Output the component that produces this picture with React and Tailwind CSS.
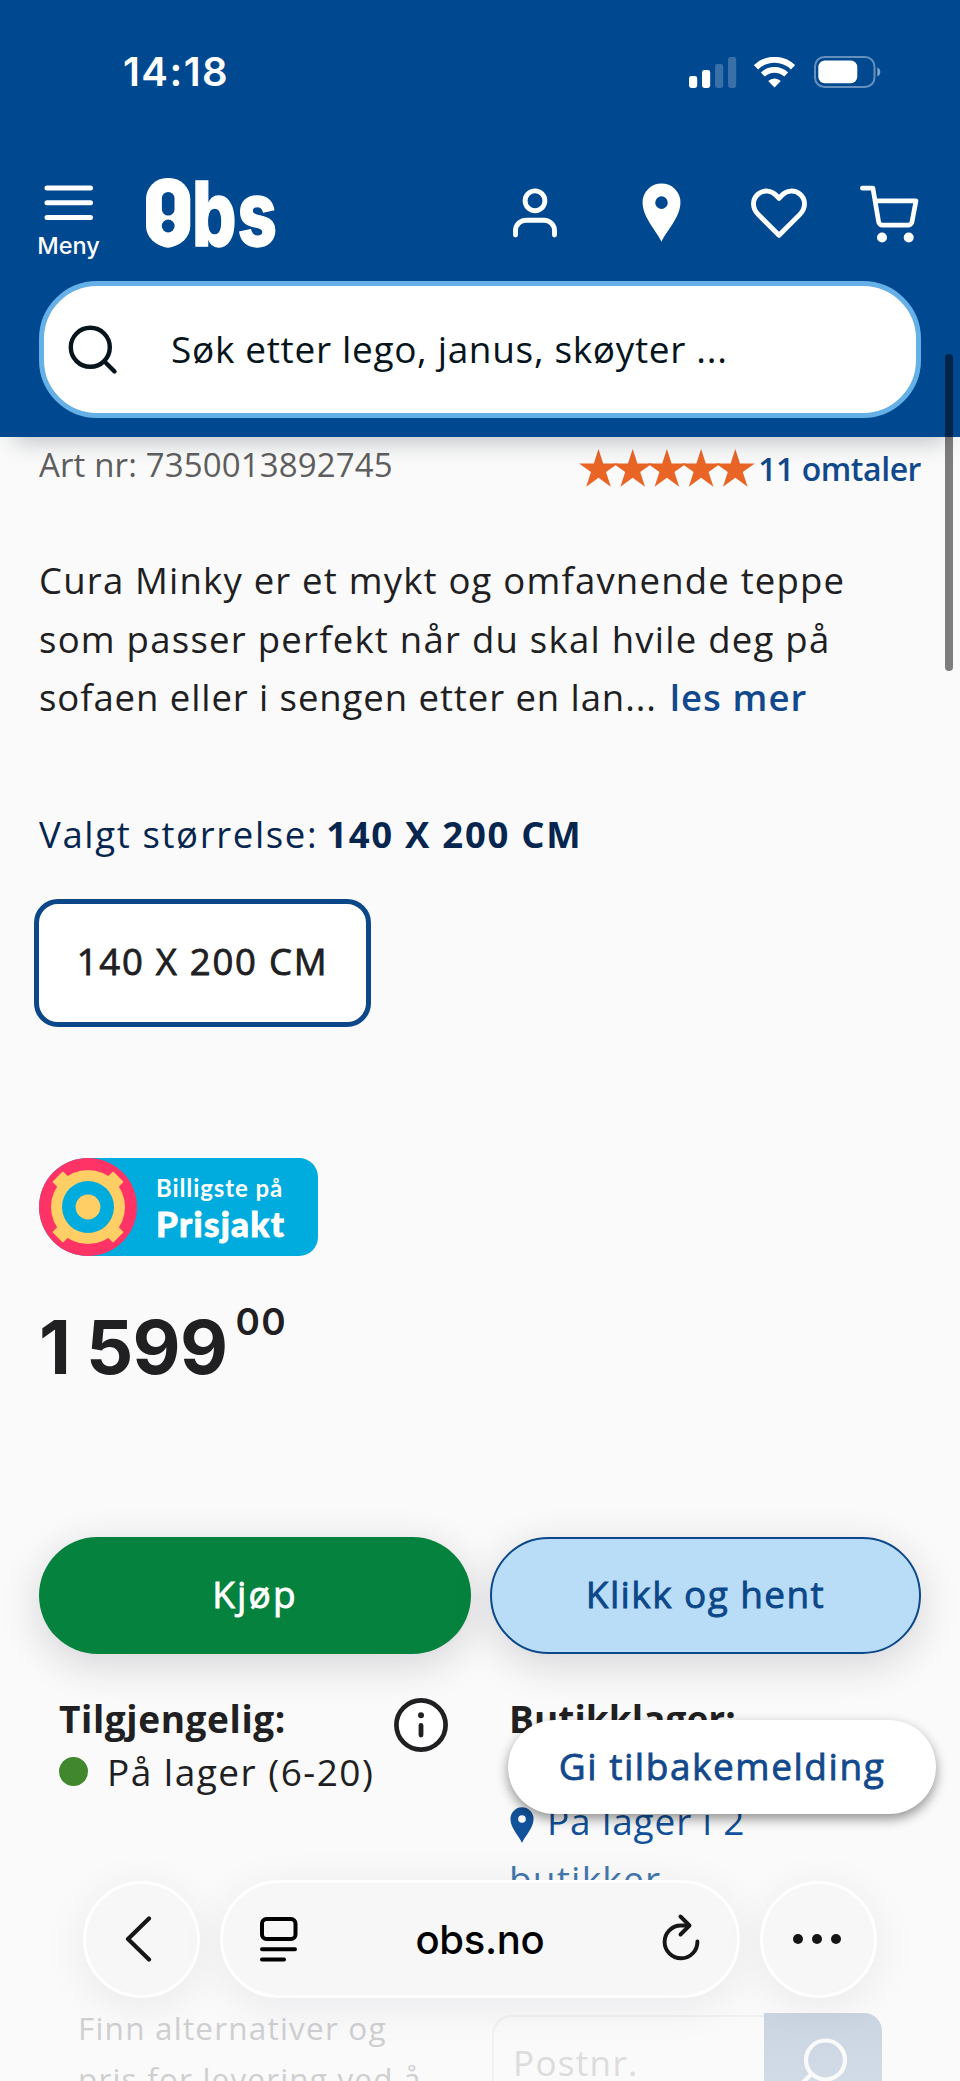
import React from "react";

const SignalIcon = () => (
  <svg className="h-[31px] w-[48px]" viewBox="0 0 48 31" fill="#fff">
    <rect x="0" y="19" width="8.2" height="12" rx="2.4" />
    <rect x="13" y="13" width="8.2" height="18" rx="2.4" />
    <rect x="26" y="7" width="8.2" height="24" rx="2.4" opacity=".22" />
    <rect x="39" y="0" width="8.2" height="31" rx="2.4" opacity=".22" />
  </svg>
);

const WifiIcon = () => (
  <svg className="h-[31px] w-[41px]" viewBox="0 0 41 31" fill="none" stroke="#fff">
    <path d="M2 10.3a26.5 26.5 0 0 1 37 0" strokeWidth="6" />
    <path d="M8.8 17.6a16.8 16.8 0 0 1 23.4 0" strokeWidth="5.6" />
    <path d="M20.5 30.5 14.2 24a9 9 0 0 1 12.6 0Z" fill="#fff" stroke="none" />
  </svg>
);

const BatteryIcon = () => (
  <svg className="h-[32px] w-[67px]" viewBox="0 0 67 32">
    <rect x="1" y="1" width="59.5" height="30" rx="9.5" fill="none" stroke="#fff" strokeWidth="2" opacity=".4" />
    <rect x="4.3" y="4.6" width="39" height="22.6" rx="6.5" fill="#fff" />
    <path d="M63.3 11.5c4 1.4 4 7.6 0 9Z" fill="#fff" opacity=".5" />
  </svg>
);

const Logo = () => (
  <svg className="-mx-1 -my-5 h-[110px] w-[140px]" viewBox="-4 -20 140 110">
    <g fill="#fff" stroke="#fff" strokeWidth="1.4" className="font-['Inter',sans-serif] font-extrabold" fontSize="90">
      <text x="1" y="67.5" textLength="42" lengthAdjust="spacingAndGlyphs">O</text>
      <text x="46" y="67.5" textLength="44.5" lengthAdjust="spacingAndGlyphs">b</text>
      <text x="91.5" y="67.5" textLength="39.5" lengthAdjust="spacingAndGlyphs">s</text>
    </g>
    {/* the O carries an upside down "!" */}
    <rect x="0" y="0" width="44.3" height="68.5" rx="21" fill="#fff" />
    <rect x="15.9" y="14" width="12.6" height="23.5" rx="6.3" fill="#00488f" />
    <circle cx="22.2" cy="48" r="6.4" fill="#00488f" />
  </svg>
);

const PersonIcon = () => (
  <svg className="h-16 w-[60px]" viewBox="0 0 60 64" fill="none" stroke="#fff" strokeWidth="4.9" strokeLinecap="round">
    <circle cx="30" cy="19.8" r="9.9" />
    <path d="M10.5 54v-4.3A10.5 10.5 0 0 1 21 39.2h18a10.5 10.5 0 0 1 10.5 10.5V54" />
  </svg>
);

const PinIcon = ({ className }) => (
  <svg className={className} viewBox="10.5 1.8 39 59.2">
    <path
      fill="currentColor"
      fillRule="evenodd"
      d="M30 60.8C24.5 49 11 36.5 11 21.2a19 19 0 1 1 38 0C49 36.5 35.5 49 30 60.8ZM30 15.2a6.3 6.3 0 1 0 0 12.6 6.3 6.3 0 0 0 0-12.6Z"
    />
  </svg>
);

const HeartIcon = () => (
  <svg className="h-16 w-[60px]" viewBox="0 0 60 64" fill="none" stroke="#fff" strokeWidth="4.9" strokeLinejoin="round">
    <path d="M30 54.2 9.3 33.6C2.8 27 3 18 9.2 13 15 8.4 22.6 9.6 26.8 14L30 17.4 33.2 14C37.4 9.6 45 8.4 50.8 13 57 18 57.2 27 50.7 33.6Z" />
  </svg>
);

const CartIcon = () => (
  <svg className="h-16 w-[60px]" viewBox="0 0 60 64" fill="none" stroke="#fff" strokeWidth="4.7" strokeLinecap="round" strokeLinejoin="round">
    <path d="M2.4 7.2h10.5l5.7 33.5a4 4 0 0 0 4 3.5h25.4a4 4 0 0 0 4-3.4L56 19.9H16" />
    <circle cx="22" cy="56.5" r="5" fill="#fff" stroke="none" />
    <circle cx="48.7" cy="56.5" r="5" fill="#fff" stroke="none" />
  </svg>
);

const Stars = () => (
  <svg className="h-[39px] w-[177px]" viewBox="0 0 177 39" fill="#e96526">
    {[0, 1, 2, 3, 4].map((i) => (
      <path
        key={i}
        transform={`translate(${i * 34.2} 0)`}
        d="M19.5 0 24.2 14.4H39L27 23.1 31.8 37.8 19.5 28.8 7.2 37.8 12 23.1 0 14.4H14.8Z"
      />
    ))}
  </svg>
);

const Target = () => (
  <svg className="h-[98px] w-[98px] shrink-0" viewBox="0 0 98 98">
    <circle cx="49" cy="49" r="49" fill="#ff3366" />
    <g fill="#ffcf66">
      <circle cx="49" cy="49" r="37" />
      <rect x="41.5" y="6" width="15" height="86" rx="1" transform="rotate(45 49 49)" />
      <rect x="41.5" y="6" width="15" height="86" rx="1" transform="rotate(-45 49 49)" />
    </g>
    <circle cx="49" cy="49" r="26" fill="#00abdd" />
    <circle cx="49" cy="49" r="12.4" fill="#ffcf66" />
  </svg>
);

const InfoIcon = () => (
  <svg className="h-[54px] w-[54px]" viewBox="0 0 54 54">
    <circle cx="27" cy="27" r="24.6" fill="#fff" stroke="#202022" strokeWidth="4.7" />
    <circle cx="27" cy="17.3" r="3" fill="#202022" />
    <path d="M27 27.5v9.5" stroke="#202022" strokeWidth="4.8" strokeLinecap="round" />
  </svg>
);

const Header = () => (
  <header className="relative z-10 flex h-[437px] flex-col bg-[#00488f] text-white shadow-[0_18px_22px_-14px_rgba(20,35,50,0.28)]">
    <div className="flex h-[144px] items-center pl-[123px] pr-[79px]">
      <span className="font-['Inter',sans-serif] text-[40px] font-semibold leading-10 tracking-[1.44px]">14:18</span>
      <div className="ml-auto flex items-center">
        <SignalIcon />
        <span className="w-[17px]" />
        <WifiIcon />
        <span className="w-[19px]" />
        <BatteryIcon />
      </div>
    </div>

    <nav className="flex h-[137px] items-center pl-[37px] pr-10">
      <button className="flex w-[63px] flex-col items-center pt-[18px]">
        <svg className="h-[36px] w-[50px]" viewBox="0 0 50 36" stroke="#fff" strokeWidth="5" strokeLinecap="round">
          <path d="M3 3h43.5M3 17.8h43.5M3 32.5h43.5" />
        </svg>
        <span className="mt-[13px] font-['Inter',sans-serif] text-[23.5px] font-medium leading-6">Meny</span>
      </button>
      <span className="ml-[46px]">
        <Logo />
      </span>
      <div className="ml-auto flex items-center">
        <PersonIcon />
        <PinIcon className="ml-[77px] mr-px h-[59px] w-[39px]" />
        <span className="ml-[67px]">
          <HeartIcon />
        </span>
        <span className="ml-[51px]">
          <CartIcon />
        </span>
      </div>
    </nav>

    <div className="mx-[39px] flex h-[137px] items-center rounded-[58px] border-[5px] border-[#66b0e8] bg-white pl-[22px] text-[#06141c]">
      <svg className="h-[54px] w-[54px]" viewBox="0 0 54 54" fill="none" stroke="currentColor" strokeWidth="4.4" strokeLinecap="round">
        <circle cx="24.3" cy="24.3" r="19.5" />
        <path d="m38.5 38.5 10 10" />
      </svg>
      <span className="mb-0.5 ml-[51px] text-[37px] tracking-[0.67px]">Søk etter lego, janus, skøyter ...</span>
    </div>
  </header>
);

const SafariBar = () => (
  <div className="absolute inset-x-0 top-[1880px] z-20 flex items-center justify-center gap-5 text-black">
    <button className="flex h-[117px] w-[117px] items-center justify-center rounded-full border-[3px] border-white bg-[#f7f7f7] pr-[6px] shadow-[0_8px_45px_rgba(20,20,50,0.07)]">
      <svg className="h-[46px] w-[28px]" viewBox="0 0 28 46" fill="none" stroke="#161616" strokeWidth="4.2" strokeLinecap="round" strokeLinejoin="round">
        <path d="M24 2.5 3 23l21 20.5" />
      </svg>
    </button>
    <div className="flex h-[118px] w-[520px] items-center justify-between rounded-full border-[3px] border-white bg-[#f7f7f7] pl-[36px] pr-[36px] shadow-[0_8px_45px_rgba(20,20,50,0.07)]">
      <svg className="h-[46px] w-[40px]" viewBox="0 0 40 46" fill="none" stroke="#000" strokeWidth="4" strokeLinecap="round">
        <rect x="3" y="3" width="33.5" height="20" rx="4.5" />
        <path d="M3 33.2h33M3 43.5h22" />
      </svg>
      <span className="pt-0.5 font-['Inter',sans-serif] text-[40px] font-medium leading-10 tracking-[-0.3px]">obs.no</span>
      <svg className="-mt-1 h-[48px] w-[40px]" viewBox="0 0 40 48" fill="none" stroke="#161616" strokeWidth="3.9" strokeLinecap="round" strokeLinejoin="round">
        <path d="M36.4 28.5A16.4 16.4 0 1 1 20 12.5h8" />
        <path d="M19.5 3.5 28.5 12.5 19.5 21.5" />
      </svg>
    </div>
    <button className="flex h-[117px] w-[117px] items-center justify-center gap-[9.5px] rounded-full border-[3px] border-white bg-[#f7f7f7] pr-[3px] shadow-[0_8px_45px_rgba(20,20,50,0.07)]">
      <span className="h-[9.5px] w-[9.5px] rounded-full bg-[#161616]" />
      <span className="h-[9.5px] w-[9.5px] rounded-full bg-[#161616]" />
      <span className="h-[9.5px] w-[9.5px] rounded-full bg-[#161616]" />
    </button>
  </div>
);

const App = () => {
  return (
    <div className="relative h-[2081px] w-[960px] overflow-hidden whitespace-nowrap bg-[#fafafa] font-['Open_Sans',sans-serif] text-[#202022]">
      <Header />

      <main className="flex flex-col px-[39px]">
        <div className="mt-[8px] flex h-[46px] items-start text-[33px] leading-10">
          <span className="tracking-[0.13px] text-[#5e5e5e]">Art nr: 7350013892745</span>
          <div className="ml-auto flex items-start text-[#12498c]">
            <span className="mt-[4px]">
              <Stars />
            </span>
            <span className="ml-[2px] mt-[4px] text-[32px] font-semibold tracking-[-0.45px]">11 omtaler</span>
          </div>
        </div>

        <p className="mt-[60px] text-[36.5px] leading-[58.5px]">
          <span className="block tracking-[1.2px]">Cura Minky er et mykt og omfavnende teppe</span>
          <span className="block tracking-[1.25px]">som passer perfekt når du skal hvile deg på</span>
          <span className="flex">
            <span className="tracking-[0.92px]">sofaen eller i sengen etter en lan...</span>
            <a className="ml-[13px] font-semibold tracking-[1.1px] text-[#12498c]">les mer</a>
          </span>
        </p>

        <div className="mt-[83px] flex text-[36.5px] leading-[48px] text-[#06264f]">
          <span className="tracking-[1.64px]">Valgt størrelse:</span>
          <span className="ml-[8px] font-bold tracking-[1.7px]">140 X 200 CM</span>
        </div>

        <button className="-ml-[5px] mt-[41px] flex h-[128px] w-[337px] items-center justify-center rounded-[24px] border-[5px] border-[#0b4789] bg-white pb-[2px] text-[36.5px] tracking-[1.75px] [-webkit-text-stroke:0.8px]">
          140 X 200 CM
        </button>

        <div className="mt-[131px] flex h-[98px] w-[279px] rounded-l-[49px] rounded-r-[19px] bg-[#00abdd] text-white">
          <Target />
          <div className="ml-[19px] flex flex-col pt-[12px] font-['Lato',sans-serif]">
            <span className="text-[24px] font-bold leading-[36px] tracking-[0.9px]">Billigste på</span>
            <span className="text-[35px] font-black leading-[34px] tracking-[1.3px] [-webkit-text-stroke:0.8px]">Prisjakt</span>
          </div>
        </div>

        <div className="mt-[51px] flex h-[80px] items-start font-['Inter',sans-serif] text-[74px] font-bold leading-[80px]">
          <span>1</span>
          <span className="ml-[15px] tracking-[-0.6px]">599</span>
          <span className="-mt-[5px] ml-[8px] text-[37px] font-semibold leading-10 tracking-[1.2px]">00</span>
        </div>

        <div className="mt-[150px] flex h-[117px] gap-[19px] text-[37px] [-webkit-text-stroke:0.8px]">
          <button className="w-[432px] rounded-full bg-[#05833e] pb-[2px] tracking-[2.2px] text-white shadow-[0_10px_40px_rgba(20,20,40,0.16)]">
            Kjøp
          </button>
          <button className="w-[431px] rounded-full border-[2.5px] border-[#0b4789] bg-[#b9ddf6] pb-[2px] tracking-[1.4px] text-[#0b4789] shadow-[0_10px_40px_rgba(20,20,40,0.16)]">
            Klikk og hent
          </button>
        </div>

        <div className="mt-[38px] flex h-[158px] text-[37px]">
          <div className="ml-[20px] w-[450px] leading-[53px]">
            <div className="flex h-[53px]">
              <span className="font-bold tracking-[0.6px]">Tilgjengelig:</span>
              <span className="ml-[108px] mt-[6px]">
                <InfoIcon />
              </span>
            </div>
            <div className="flex items-center">
              <span className="h-[29px] w-[29px] rounded-full bg-[#41872e]" />
              <span className="ml-[19px] tracking-[1.48px]">På lager (6-20)</span>
            </div>
          </div>
          <div>
            <div className="font-bold leading-[53px] tracking-[0.05px]">Butikklager:</div>
            <div className="mt-[47px] flex items-start leading-[58px] text-[#12529a]">
              <PinIcon className="ml-px mt-[15px] h-[36px] w-[24px]" />
              <span className="ml-[13px] tracking-[0.85px]">På lager i 2</span>
            </div>
            <div className="leading-[58px] tracking-[1.2px] text-[#4377ac]">butikker</div>
          </div>
        </div>

        {/* delivery block, faded behind the browser toolbar */}
        <div className="mt-[152px] flex text-[31.5px] leading-[51px] text-[#cfcfd1]">
          <div className="ml-[39px] w-[414px]">
            <div className="tracking-[1.2px]">Finn alternativer og</div>
            <div className="tracking-[1.17px]">pris for levering ved å</div>
          </div>
          <div className="mt-[11px] flex h-[115px] w-[390px]">
            <div className="mt-[2px] flex-1 rounded-l-[20px] border-2 border-r-0 border-[#f1f1f2] pl-[19px] pt-[20px] text-[35px] tracking-[1.33px] text-[#dcdcde]">
              Postnr.
            </div>
            <div className="w-[118px] rounded-r-[18px] bg-gradient-to-b from-[#cbd5e1] to-[#d6e0eb] pl-[32px] pt-[22px]">
              <svg className="h-[54px] w-[54px]" viewBox="0 0 54 54" fill="none" stroke="#fafafa" strokeWidth="4.2" strokeLinecap="round">
                <circle cx="29.5" cy="25" r="19.5" />
                <path d="m15.5 39-10 10" />
              </svg>
            </div>
          </div>
        </div>
      </main>

      <button className="absolute left-[508px] top-[1720px] z-10 h-[94px] w-[428px] rounded-full bg-white pb-[2px] text-[37px] tracking-[1.55px] text-[#12498c] shadow-[0_5px_12px_rgba(0,0,0,0.42)] [-webkit-text-stroke:0.8px]">
        Gi tilbakemelding
      </button>

      <SafariBar />

      {/* scroll indicator */}
      <div className="absolute left-[945px] top-[354px] z-30 h-[317px] w-[8px] rounded-full bg-black/50" />
    </div>
  );
};

export default App;
